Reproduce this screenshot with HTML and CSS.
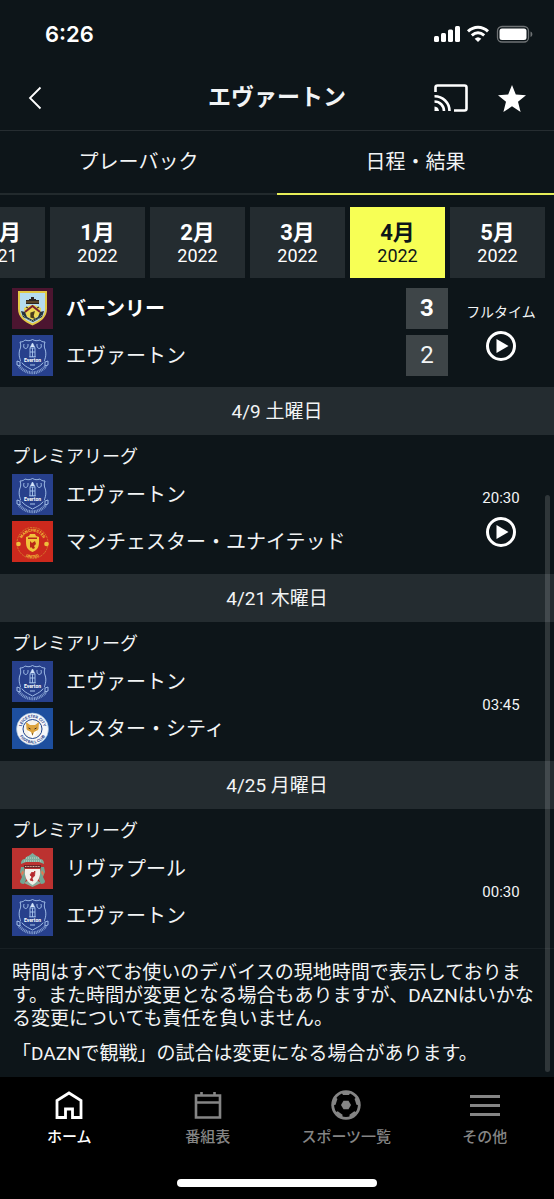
FILE: index.html
```html
<!DOCTYPE html>
<html lang="ja">
<head>
  <meta charset="UTF-8" />
  <meta name="viewport" content="width=device-width, initial-scale=1" />
  <title>エヴァートン</title>
  <link rel="stylesheet" href="styles.css">
</head>
<body>

  <!-- Club crests and shared icons -->
  <svg class="sprites" aria-hidden="true">
    <symbol id="burnley" viewBox="0 0 41 41">
      <rect width="41" height="41" fill="#4c1530" />
      <path d="M6 3h29v18c0 8-6 13-14.500 16.500C12 34 6 29 6 21z" fill="#e3c945" />
      <path d="M8 5h25v16c0 7-5 11-12.500 14.300C13 32 8 28 8 21z" fill="#b5dcef" />
      <path d="M12 20c3-1 5-3 8.500-3s5.500 2 8.500 3c0 7-3 9-8.500 12C15 29 12 27 12 20z" fill="#ecd855" />
      <path d="M14 12h3v-1h2V9h3v2h2v1h3v4H14z" fill="#2b2523" />
      <path d="M14 14h13" stroke="#8f6d34" />
      <path d="M13 24l7.500-6 7.500 6" stroke="#7b2030" stroke-width="2" fill="none" />
      <path d="M14 19l2 1M27 19l-2 1M19 25l3-1-1 4 1 2-3-1z" stroke="#4b3b1e" stroke-width="1.300" fill="#4b3b1e" />
      <path d="M9 23l4 1 2 5 5.500 3 5.500-3 2-5 4-1-2 6-9 5-10-5z" fill="#26333b" />
      <path d="M11 27l4 4 5.500 2 5.500-2 4-4" stroke="#8ca5a3" stroke-dasharray="1 1" fill="none" />
    </symbol>

    <symbol id="everton" viewBox="0 0 41 41">
      <rect width="41" height="41" fill="#27408c" />
      <g fill="none" stroke="#a9c6ed" stroke-width=".9">
        <path d="M8 7c3 0 4-1 5-2 3 1 5 1 7.500-.5C23 6 25 6 28 5c1 1 2 2 5 2-1 3-1 5 .3 8 1.500 5-.3 11-3.300 14-3 3-6 4-9.500 6-3.500-2-6.500-3-9.500-6-3-3-4.800-9-3.300-14C9 12 9 10 8 7z" />
        <path d="M12 9c-2 6 5 6 4 0M25 9c-1 6 6 6 4 0" />
        <path d="M18 13l2.500-5 2.500 5v9h-5zM18 13h5M18 17h5M20.500 13v9M17 22h7" />
        <path d="M5 26l3 1v4l-3-1zM36 26l-3 1v4l3-1z" />
        <path d="M7 31c8 9 19 9 27 0" stroke-width="3" stroke-dasharray="1 .7" opacity=".7" />
      </g>
      <path d="M18.500 12l2-4 2 4z" fill="#d6e5fa" />
      <rect x="9" y="22.500" width="23" height="5" fill="#27408c" />
      <path d="M18 30h5" stroke="#a9c6ed" />
    </symbol>

    <symbol id="play" viewBox="0 0 30 30">
      <circle cx="15" cy="15" r="13.500" fill="none" stroke="#fff" stroke-width="3" />
      <path d="M10.500 8v14L22.500 15z" fill="#fff" />
    </symbol>
  </svg>

  <div class="app">
    <div class="status-bar">
      <span>6:26</span>
      <svg width="100" height="18" viewBox="0 0 100 18" aria-hidden="true">
        <g fill="#fff">
          <rect x="0" y="11" width="5" height="6" rx="1.500" />
          <rect x="7" y="8" width="5" height="9" rx="1.500" />
          <rect x="14" y="4.500" width="5" height="12.500" rx="1.500" />
          <rect x="21" y="1" width="5" height="16" rx="1.500" />
          <path d="M44 17l-3.300-3.200a4.800 4.800 0 0 1 6.600 0z" />
        </g>
        <path d="M34 6.300c6-5.500 14-5.500 20 0M37.800 10.400c4-3.500 8.400-3.500 12.400 0" stroke="#fff" stroke-width="3" fill="none" />
        <rect x="63.500" y="1.500" width="31" height="15.500" rx="4.500" fill="none" stroke="#6e7274" stroke-width="1.300" />
        <rect x="65.500" y="3.500" width="27" height="11.500" rx="2.500" fill="#fff" />
        <path d="M96.500 6.500c2.500.8 2.500 4.700 0 5.500z" fill="#6e7274" />
      </svg>
    </div>

    <header class="title-bar">
      <button class="icon-btn" aria-label="戻る">
        <svg width="14" height="24" viewBox="0 0 14 24"><path d="M12.500 1.500L2 12l10.500 10.500" fill="none" stroke="#fff" stroke-width="1.800" /></svg>
      </button>
      <h1>エヴァートン</h1>
      <div class="title-actions">
        <button class="icon-btn" aria-label="キャスト">
          <svg width="34" height="28" viewBox="0 0 34 28">
            <path d="M1.500 8V3.500q0-2 2-2h27q2 0 2 2v21q0 2-2 2H20" fill="none" stroke="#fff" stroke-width="2.600" />
            <path d="M.5 12.200A14.800 14.800 0 0 1 15.500 27M.5 17.500a9.500 9.500 0 0 1 9.500 9.500" fill="none" stroke="#fff" stroke-width="2.600" />
            <path d="M.5 22.500A5 5 0 0 1 5 27H.5z" fill="#fff" />
          </svg>
        </button>
        <button class="icon-btn" aria-label="お気に入り">
          <svg width="28" height="27" viewBox="0 0 28 27"><path d="M14 0l3.800 9.600L28 10.200l-8 6.500L22.600 27 14 21.300 5.400 27 8 16.700 0 10.200l10.200-.6z" fill="#fff" /></svg>
        </button>
      </div>
    </header>

    <div class="tabs" role="tablist">
      <button class="tab" role="tab" aria-selected="false">プレーバック</button>
      <button class="tab active" role="tab" aria-selected="true">日程・結果</button>
    </div>

    <div class="months">
      <button class="month"><strong>12月</strong><span>2021</span></button>
      <button class="month"><strong>1月</strong><span>2022</span></button>
      <button class="month"><strong>2月</strong><span>2022</span></button>
      <button class="month"><strong>3月</strong><span>2022</span></button>
      <button class="month active"><strong>4月</strong><span>2022</span></button>
      <button class="month"><strong>5月</strong><span>2022</span></button>
    </div>

    <main class="fixtures">
      <section class="match first">
        <div class="teams">
          <div class="team winner"><svg class="crest"><use href="#burnley" /></svg><span class="name">バーンリー</span><span class="score">3</span></div>
          <div class="team"><svg class="crest" viewBox="0 0 41 41"><use href="#everton" /><text x="20.500" y="27" class="crest-name">Everton</text></svg><span class="name">エヴァートン</span><span class="score">2</span></div>
        </div>
        <div class="status">
          <span class="fulltime">フルタイム</span>
          <button class="icon-btn play" aria-label="再生"><svg width="30" height="30"><use href="#play" /></svg></button>
        </div>
      </section>

      <h2 class="date">4/9 土曜日</h2>
      <section class="match">
        <p class="league">プレミアリーグ</p>
        <div class="teams">
          <div class="team"><svg class="crest" viewBox="0 0 41 41"><use href="#everton" /><text x="20.500" y="27" class="crest-name">Everton</text></svg><span class="name">エヴァートン</span></div>
          <div class="team">
            <svg class="crest" viewBox="0 0 41 41">
              <rect width="41" height="41" fill="#cc291d" />
              <circle cx="20.500" cy="22" r="15.500" fill="none" stroke="#d99a32" stroke-width=".7" stroke-dasharray="2 .8" />
              <path id="unitedTop" d="M9.500 25a11.400 11.400 0 1 1 22 0" fill="none" />
              <path id="unitedBottom" d="M5.500 22a15 15 0 0 0 30 0" fill="none" />
              <text class="crest-ring gold"><textPath href="#unitedTop" startOffset="50%">MANCHESTER</textPath></text>
              <text class="crest-ring gold"><textPath href="#unitedBottom" startOffset="50%">UNITED</textPath></text>
              <path d="M14 16l3-1 1-2h5l1 2 3 1v5c0 6-2 8-6.500 10C16 29 14 27 14 21z" fill="#f1c23b" />
              <path d="M16 18h9v-1.500h-9zM18 20l2 2 3-2 1 3-2 2 1 2-2 1-2-2-1 1z" fill="#b82817" />
              <circle cx="6.500" cy="23" r="2.300" fill="#efbf3c" />
              <circle cx="34.500" cy="23" r="2.300" fill="#efbf3c" />
            </svg>
            <span class="name">マンチェスター・ユナイテッド</span>
          </div>
        </div>
        <div class="status">
          <span>20:30</span>
          <button class="icon-btn play" aria-label="再生"><svg width="30" height="30"><use href="#play" /></svg></button>
        </div>
      </section>

      <h2 class="date">4/21 木曜日</h2>
      <section class="match">
        <p class="league">プレミアリーグ</p>
        <div class="teams">
          <div class="team"><svg class="crest" viewBox="0 0 41 41"><use href="#everton" /><text x="20.500" y="27" class="crest-name">Everton</text></svg><span class="name">エヴァートン</span></div>
          <div class="team">
            <svg class="crest" viewBox="0 0 41 41">
              <rect width="41" height="41" fill="#1d4f9f" />
              <circle cx="20.500" cy="21" r="16" fill="#f5f7fa" stroke="#94b5d9" stroke-width=".6" />
              <circle cx="20.500" cy="21" r="9.500" fill="#f7f4eb" stroke="#1f438c" />
              <path id="leicesterTop" d="M10.500 26a11.200 11.200 0 1 1 20 0" fill="none" />
              <path id="leicesterBottom" d="M6 21a14.500 14.500 0 0 0 29 0" fill="none" />
              <text class="crest-ring navy"><textPath href="#leicesterTop" startOffset="50%">LEICESTER CITY</textPath></text>
              <text class="crest-ring navy"><textPath href="#leicesterBottom" startOffset="50%">FOOTBALL CLUB</textPath></text>
              <path d="M14 14l4 3h5l4-3-.5 7-3 5-3 3-3-3-3-5z" fill="#dca33d" />
              <path d="M15 22l4 2 1.500 4L22 24l4-2-3 6-2.500 2L18 28z" fill="#fff" />
              <path d="M16.500 20l2 1M24.500 20l-2 1M20 26h1" stroke="#3c2b23" />
            </svg>
            <span class="name">レスター・シティ</span>
          </div>
        </div>
        <div class="status"><span>03:45</span></div>
      </section>

      <h2 class="date">4/25 月曜日</h2>
      <section class="match">
        <p class="league">プレミアリーグ</p>
        <div class="teams">
          <div class="team">
            <svg class="crest" viewBox="0 0 41 41">
              <rect width="41" height="41" fill="#bc3230" />
              <path d="M9 16c0-4 2-5 4-5 1-3 4-3 5-4l2.500-2L23 7c1 1 4 1 5 4 2 0 4 1 4 5l-5-2H14z" fill="#7cae9c" />
              <path d="M12 13h17M14 10h13" stroke="#c7dbcb" stroke-dasharray="1 1" />
              <path d="M12 17h17v3H12z" fill="#6b2528" />
              <path d="M13 18.500h15" stroke="#dfb7a5" stroke-dasharray="1 .6" />
              <path d="M9 19h3l2 13-2 4c-3 0-4-1-4-3l2-4-2-5zM32 19h-3l-2 13 2 4c3 0 4-1 4-3l-2-4 2-5z" fill="#70a694" />
              <path d="M9 25l2-3 1 3-2 3zM32 25l-2-3-1 3 2 3z" fill="#dc7b55" />
              <path d="M12 35l8.500 4 8.500-4-3-2H15z" fill="#8cae9d" />
              <path d="M13 21h15c1 8-2 13-7.500 16C15 34 12 29 13 21z" fill="#f3efe9" />
              <path d="M18 32l2-3-2-2 2-3 1 1 2-2-.5 5-2.500 2 1 3z" fill="#b5282d" stroke="#b5282d" stroke-width=".8" />
            </svg>
            <span class="name">リヴァプール</span>
          </div>
          <div class="team"><svg class="crest" viewBox="0 0 41 41"><use href="#everton" /><text x="20.500" y="27" class="crest-name">Everton</text></svg><span class="name">エヴァートン</span></div>
        </div>
        <div class="status"><span>00:30</span></div>
      </section>

      <div class="notes">
        <p>時間はすべてお使いのデバイスの現地時間で表示しております。また時間が変更となる場合もありますが、DAZNはいかなる変更についても責任を負いません。</p>
        <p>「DAZNで観戦」の試合は変更になる場合があります。</p>
      </div>
      <div class="scrollbar"></div>
    </main>

    <nav class="bottom-nav">
      <a href="#" class="active">
        <svg width="30" height="30" viewBox="0 0 30 30"><path d="M3 27.500V10.500L15 3l12 7.500v17h-8.500V19h-7v8.500z" fill="none" stroke="currentColor" stroke-width="2.800" /></svg>
        <span>ホーム</span>
      </a>
      <a href="#">
        <svg width="30" height="30" viewBox="0 0 30 30"><path d="M3 5.500h24v22H3zM3 12.500h24M8.500 2v4M21.500 2v4" fill="none" stroke="currentColor" stroke-width="2.600" /></svg>
        <span>番組表</span>
      </a>
      <a href="#">
        <svg width="30" height="30" viewBox="0 0 30 30">
          <circle cx="15" cy="15" r="13.300" fill="none" stroke="currentColor" stroke-width="2.800" />
          <path d="M12.500 10.700h5l2.500 4.300-2.500 4.300h-5L10 15z" fill="currentColor" />
          <g fill="currentColor">
            <path id="patch" d="M10 1.500h10l-2 3.500h-6z" />
            <use href="#patch" transform="rotate(72 15 15)" />
            <use href="#patch" transform="rotate(144 15 15)" />
            <use href="#patch" transform="rotate(216 15 15)" />
            <use href="#patch" transform="rotate(288 15 15)" />
          </g>
        </svg>
        <span>スポーツ一覧</span>
      </a>
      <a href="#">
        <svg width="30" height="30" viewBox="0 0 30 30"><path d="M0 6.500h30M0 15.500h30M0 24.500h30" stroke="currentColor" stroke-width="2.800" /></svg>
        <span>その他</span>
      </a>
    </nav>
    <div class="home-indicator"></div>
  </div>

</body>
</html>
```
FILE: styles.css
```css
* {
  box-sizing: border-box;
}

body {
  margin: 0;
  background: #0d1519;
  color: #f2f4f5;
  font-family: Roboto, "Noto Sans CJK JP", sans-serif;
}

button {
  font-family: inherit;
  color: inherit;
  background: none;
  border: none;
  padding: 0;
  cursor: pointer;
}

h1, h2, p {
  margin: 0;
}

.sprites {
  position: absolute;
  width: 0;
  height: 0;
}

.app {
  display: flex;
  flex-direction: column;
  min-height: 100vh;
}

.icon-btn {
  display: flex;
  align-items: center;
  justify-content: center;
}

/* Status bar */
.status-bar {
  display: flex;
  align-items: center;
  justify-content: space-between;
  height: 66px;
  padding: 2px 20px 0 45px;
  font-family: Inter, sans-serif;
  font-size: 22px;
  font-weight: 600;
  color: #fff;
}

/* Title */
.title-bar {
  display: grid;
  grid-template-columns: 1fr auto 1fr;
  align-items: center;
  height: 65px;
  padding: 0 28px;
  border-bottom: 1px solid #262d31;
}

.title-bar > .icon-btn {
  justify-self: start;
}

.title-bar h1 {
  font-size: 23px;
  line-height: 32px;
  font-weight: bold;
}

.title-actions {
  display: flex;
  justify-content: flex-end;
  gap: 30px;
}

/* Tabs */
.tabs {
  display: flex;
}

.tab {
  flex: 1;
  height: 64px;
  font-size: 20px;
  line-height: 28px;
  border-bottom: 2px solid #222a2d;
}

.tab.active {
  border-bottom-color: #e6ee58;
}

/* Months */
.months {
  display: flex;
  justify-content: flex-end;
  gap: 5px;
  padding: 12px 9px 0 0;
  overflow: hidden;
}

.month {
  display: flex;
  flex: 0 0 95px;
  flex-direction: column;
  align-items: center;
  justify-content: center;
  height: 71px;
  padding-top: 3px;
  background: #242c30;
  color: #fff;
}

.month strong {
  font-size: 22px;
  line-height: 24px;
}

.month span {
  font-size: 18px;
  line-height: 22px;
}

.month.active {
  background: #f7ff55;
  color: #0d1519;
}

/* Fixtures */
.fixtures {
  position: relative;
  flex: 1;
}

.date {
  height: 48px;
  background: #242c30;
  font-size: 19px;
  line-height: 50px;
  font-weight: normal;
  text-align: center;
}

.match {
  display: grid;
  grid-template-columns: 1fr 106px;
  padding-bottom: 12px;
}

.match.first {
  padding: 10px 0 11px;
}

.league {
  grid-column: 1 / -1;
  height: 39px;
  padding-left: 12px;
  font-size: 18px;
  line-height: 44px;
}

.teams {
  display: flex;
  flex-direction: column;
  gap: 6px;
  padding-left: 12px;
}

.team {
  display: flex;
  align-items: center;
  height: 41px;
}

.crest {
  flex: none;
  width: 41px;
  height: 41px;
}

.name {
  flex: 1;
  padding-left: 13px;
  font-size: 20px;
  line-height: 28px;
}

.score {
  width: 42px;
  height: 41px;
  background: #3e4548;
  font-size: 24px;
  line-height: 41px;
  text-align: center;
}

.winner .name,
.winner .score {
  font-weight: bold;
  color: #fff;
}

.status {
  display: flex;
  flex-direction: column;
  align-items: center;
  justify-content: center;
  font-size: 15px;
  line-height: 24px;
}

.fulltime {
  font-size: 14px;
}

.play {
  padding: 7px 0 4px;
}

.crest-name {
  font: bold 5px Roboto, sans-serif;
  text-anchor: middle;
  fill: #fff;
}

.crest-ring {
  font: bold 4px Roboto, sans-serif;
  text-anchor: middle;
}

.gold {
  fill: #f1c23b;
}

.navy {
  fill: #1f438c;
}

.notes {
  padding: 12px;
  border-top: 1px solid #182024;
  font-size: 19px;
  line-height: 23px;
}

.notes p + p {
  margin-top: 12px;
}

.scrollbar {
  position: absolute;
  top: 217px;
  right: 4px;
  bottom: 5px;
  width: 5px;
  border-radius: 3px;
  background: rgba(255, 255, 255, 0.14);
}

/* Bottom navigation */
.bottom-nav {
  display: grid;
  grid-template-columns: repeat(4, 1fr);
  padding-top: 13px;
  background: #000;
}

.bottom-nav a {
  display: flex;
  flex-direction: column;
  align-items: center;
  gap: 6px;
  color: #858585;
  font-size: 15px;
  line-height: 22px;
  font-weight: 500;
  text-decoration: none;
}

.bottom-nav a.active {
  color: #fff;
}

.home-indicator {
  padding: 31px 0 12px;
  background: #000;
}

.home-indicator::before {
  content: "";
  display: block;
  width: 36%;
  height: 8px;
  margin: 0 auto;
  border-radius: 4px;
  background: #fff;
}
```
